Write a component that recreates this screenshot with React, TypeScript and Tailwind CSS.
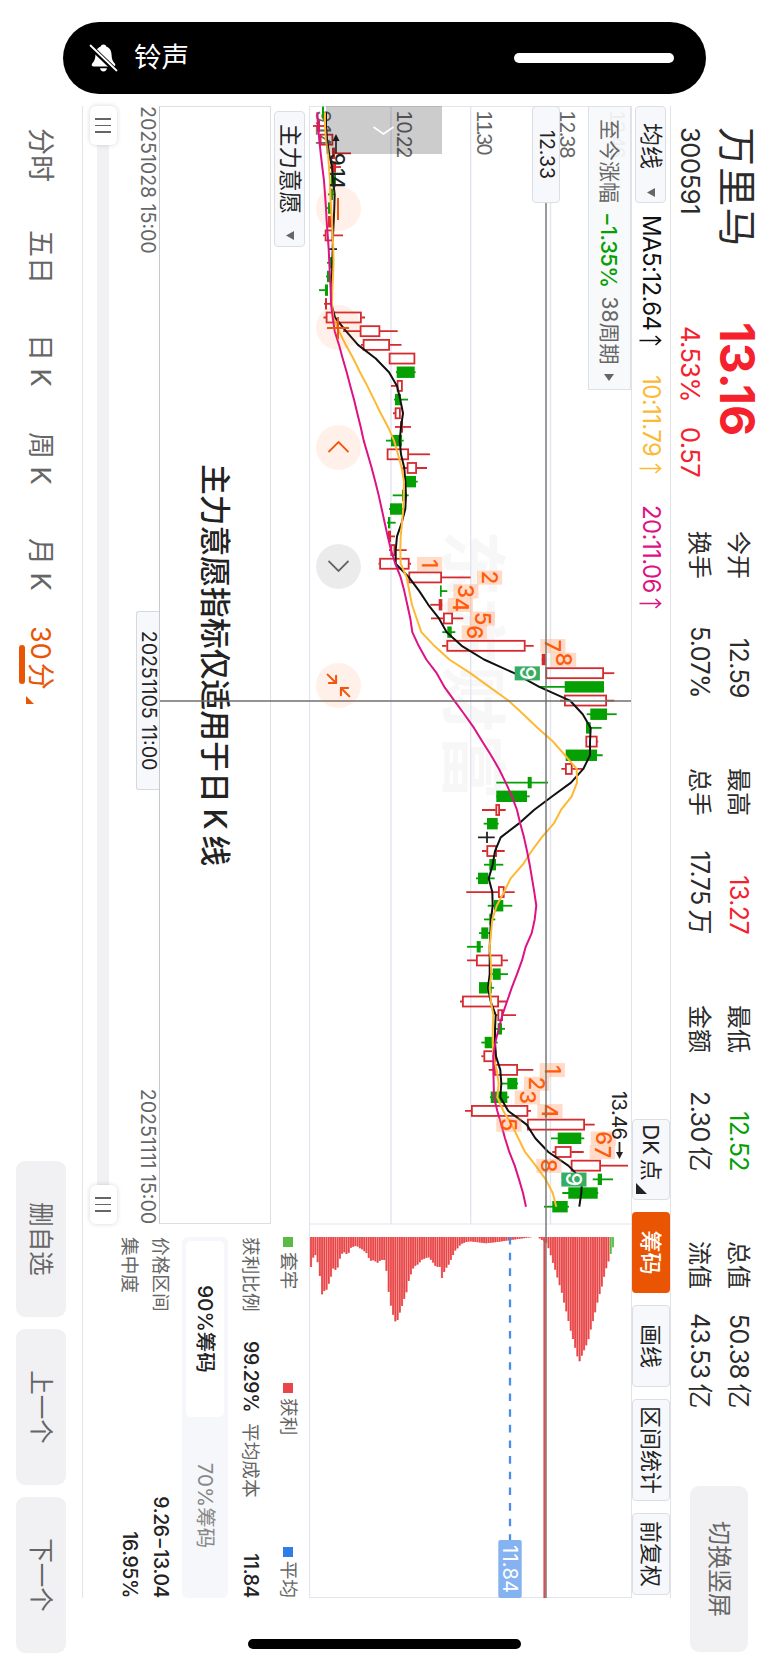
import React from "react";
import { Minimize2 } from "lucide-react";

// [body low, body high, wick low, wick high, kind]
// r = hollow red, f = filled red, g = green, k = doji
// levels are pixels above the bottom edge of the screen
type Candle = [number, number, number, number, string];

const CANDLES: Candle[] = [
  [322, 324, 322, 324, "g"],
  [317, 320, 313, 327, "f"],
  [320, 333, 320, 333, "r"],
  [332, 335, 332, 351, "f"],
  [332, 336, 332, 341, "f"],
  [331, 336, 331, 336, "g"],
  [331, 333, 328, 334, "g"],
  [328, 331, 327, 331, "g"],
  [328, 332, 328, 332, "f"],
  [325, 333, 323, 343, "r"],
  [333, 333, 329, 337, "k"],
  [329, 333, 327, 334, "g"],
  [327, 330, 326, 330, "g"],
  [325, 328, 319, 328, "g"],
  [325, 327, 324, 330, "f"],
  [326, 361.5, 323.5, 365, "r"],
  [360, 380, 343, 397.7, "r"],
  [363, 389.7, 361, 401.5, "r"],
  [389, 415, 389, 415, "r"],
  [396.7, 414.7, 396, 415.7, "g"],
  [397, 402.5, 391, 402.5, "r"],
  [395, 401, 394, 408, "g"],
  [395, 400.5, 393, 400.5, "r"],
  [400, 403, 395, 411, "f"],
  [391, 402, 386, 403.7, "g"],
  [387, 408.7, 387, 430, "r"],
  [407, 416.7, 402, 427, "r"],
  [406, 416, 406, 417.7, "g"],
  [402, 404.7, 392.7, 408.7, "g"],
  [390, 402, 389, 405, "g"],
  [388, 390.3, 387, 395.7, "g"],
  [388, 391, 387, 395, "f"],
  [390.7, 395, 389, 406.7, "r"],
  [379.5, 409.3, 378.5, 411, "r"],
  [408.7, 441.7, 408.7, 470.7, "r"],
  [440, 441.7, 440, 447.3, "g"],
  [438.7, 442.3, 430.3, 442.3, "f"],
  [443.3, 452.7, 431, 463.3, "r"],
  [447.3, 451.7, 442.3, 455.3, "g"],
  [446.7, 525.3, 442, 533.7, "r"],
  [541.7, 545.7, 541.7, 545.7, "f"],
  [545.7, 603.7, 545.7, 614.3, "r"],
  [564.7, 604, 539, 604, "g"],
  [564.3, 606.7, 560, 614.3, "r"],
  [590.3, 607, 586.7, 616.7, "g"],
  [586, 590.7, 586, 601.7, "g"],
  [585.7, 597.3, 585.7, 598.3, "r"],
  [565.7, 597, 565.7, 602.7, "g"],
  [565.3, 572.3, 561.3, 582.7, "r"],
  [527.7, 531.7, 496.3, 548, "g"],
  [496.3, 527, 496.3, 529.7, "g"],
  [495.7, 499.7, 482, 505.7, "r"],
  [487, 497.7, 483.7, 498.7, "g"],
  [487, 487, 478, 494.7, "k"],
  [486.7, 496.7, 482, 504.7, "r"],
  [489.3, 496, 484, 503.3, "g"],
  [478, 488.3, 476, 494.7, "g"],
  [498.3, 504.3, 466.3, 514.7, "r"],
  [494, 503.3, 487.7, 512.3, "g"],
  [489.3, 491.7, 484, 495.3, "g"],
  [481.3, 488.3, 479, 490.7, "g"],
  [476.7, 480.7, 467, 483, "g"],
  [476.3, 502.3, 467, 508, "r"],
  [492.7, 500.7, 489.3, 508, "g"],
  [479, 491.7, 479, 494, "g"],
  [462.3, 498.7, 460, 506.7, "r"],
  [497.7, 502.7, 495.3, 516, "r"],
  [497.7, 502, 494.7, 505, "g"],
  [484.7, 493.3, 481.3, 497.7, "g"],
  [483.7, 496, 481.3, 496, "r"],
  [494.3, 517.7, 488.7, 533.3, "r"],
  [507.3, 517.3, 501.7, 518, "g"],
  [490.7, 507.3, 490, 509, "g"],
  [471.3, 528, 465, 531, "r"],
  [527.3, 584.7, 527.3, 594.7, "r"],
  [557.7, 581.3, 551, 584.3, "g"],
  [555, 571.3, 552.3, 583.7, "r"],
  [571, 600.7, 571, 628, "r"],
  [597.7, 602, 592.7, 613, "g"],
  [568.3, 597.7, 562.3, 598.3, "g"],
  [552.3, 567.7, 544, 569, "g"],
];

const MA5 = [
  326, 326, 327, 329, 332, 333, 334.7, 334.3, 333.7, 333, 332.7, 332.3, 332, 331.7, 331.3, 335, 346, 358, 375.7, 389,
  397, 400.3, 403, 401, 399.7, 401, 404.3, 405.3, 406, 405.3, 401.7, 397, 395.7, 395.7, 409, 419.3, 428.3, 439, 446.7,
  461.7, 484, 514.3, 539.3, 570, 582.7, 590.7, 590, 590, 583.3, 571, 552.3, 534, 518.7, 500.7, 495, 492.7, 488.7,
  492.3, 492.7, 491, 490.3, 489.7, 489.7, 489.7, 488, 490.7, 495.7, 495, 495, 496, 500.3, 501.3, 500.3, 508.3, 526.7,
  535.3, 548.3, 568.3, 582, 581.3, 579.3,
];

const MA10 = [
  325, 325, 326, 328, 329, 330, 330.3, 331, 332, 332.7, 333.3, 333.5, 333, 332.3, 332, 333.3, 339, 345.7, 353.3, 360,
  367.3, 374, 380.7, 388, 394, 398, 401.7, 404, 403.7, 403.3, 402, 400.7, 400.3, 400.7, 406.7, 409.3, 412, 416.7,
  421.3, 434.3, 449.3, 470.3, 489.3, 508.3, 523.3, 537.7, 553, 565, 576.7, 577, 571.7, 561, 553.7, 541.7, 531.7, 522.7,
  510.7, 504, 496.7, 492.3, 491, 489.7, 490.7, 491.3, 489.7, 491, 493.3, 492.7, 492.7, 493.3, 496.7, 498.7, 497.3,
  503.3, 511.7, 518.3, 525, 535.7, 545.7, 552.7, 556.3,
];

const MA20 = [
  317.3, 318, 319.3, 320.7, 322.3, 324, 325, 326, 326.7, 327.7, 328.7, 329.3, 330, 330.7, 331, 332.7, 334.7, 339,
  342.7, 346.7, 350.3, 354, 357.3, 360.7, 363.7, 367.7, 371.7, 375.3, 378.7, 381.7, 384.7, 387.7, 391, 395.3, 400.7,
  404.3, 407.3, 410.3, 412.3, 418.7, 426.3, 436.7, 444.3, 454.3, 464.3, 474, 482.3, 491, 499, 505.7, 512, 517, 520.3,
  524, 527, 529.7, 532, 534.3, 536.3, 534.7, 531.7, 525.7, 522, 517, 511.7, 507, 502.3, 498.7, 495.3, 493.3, 493.3,
  493.7, 494, 497.3, 501.3, 505, 509.3, 514.7, 519, 523, 526,
];

// [candle index, low edge of the tag, digit]
const TAGS: [number, number, string][] = [
  [33, 417, "1"],
  [34, 477, "2"],
  [35, 453.3, "3"],
  [36, 447.7, "4"],
  [37, 469.7, "5"],
  [38, 461.7, "6"],
  [39, 540.3, "7"],
  [40, 551, "8"],
  [41, 514.7, "9"],
  [70, 539.7, "1"],
  [71, 524, "2"],
  [72, 514.7, "3"],
  [73, 537.3, "4"],
  [74, 496.3, "5"],
  [75, 590.7, "6"],
  [76, 589.7, "7"],
  [77, 536.3, "8"],
  [78, 561.3, "9"],
];

// [level, length] of the chip distribution bars
const CHIPS: [number, number][] = [
  [311, 30], [313, 21], [315, 17], [317, 22], [319.3, 33], [321.7, 58], [324, 54], [326, 54], [328.3, 48],
  [330.7, 41], [332.7, 31], [335, 33], [337.3, 32], [339.3, 23], [341.7, 17], [344, 15], [346, 17], [348.3, 17],
  [350.3, 11], [352.7, 10], [355, 9], [357, 9], [359.3, 11], [361.7, 12], [364, 14], [366, 15], [368.3, 20],
  [370.3, 24], [372.7, 23], [375, 24], [377.3, 26], [379.3, 24], [381.7, 23], [384, 22], [386, 29], [388.3, 52],
  [390.3, 66], [392.7, 76], [394.7, 84], [397, 85], [399.3, 77], [401.7, 70], [403.7, 63], [406, 58], [408, 46],
  [410.3, 39], [412.7, 32], [415, 29], [417, 28], [419.3, 26], [421.3, 23], [423.7, 22], [426, 21], [428.3, 20],
  [430.3, 22], [432.7, 25], [434.7, 28], [437, 31], [439.3, 26], [441.3, 43], [443.7, 36], [446, 31], [448, 29],
  [450.3, 24], [452.7, 19], [454.7, 14], [457, 12], [459.3, 9], [461.3, 7], [463.7, 6], [466, 5], [470, 4.3],
  [476, 5], [486, 6.3], [497, 5], [507, 3.6], [513, 2.7], [523, 1.3], [533, 0], [538, 0], [541, 2.5], [546, 5],
  [548.5, 11], [550.7, 18], [552.7, 25], [555, 32], [557.3, 40], [559.3, 47], [561.7, 55], [563.7, 64],
  [566, 73], [568.3, 83], [570.3, 92], [572.7, 101], [575, 110], [577.3, 119], [579.3, 125], [581.7, 119],
  [583.7, 114], [586, 109], [588.3, 103], [590.3, 94], [592.7, 85], [595, 76], [597, 67], [599.3, 58],
  [601.7, 50], [603.7, 41], [606, 32], [608.3, 25], [610.3, 18], [612.7, 11], [614.7, 4],
];

const cx = (i: number) => 6.3 + i * 13.68;
const ly = (level: number) => 631 - level;
const points = (ma: number[]) => ma.map((v, i) => `${cx(i)},${ly(v)}`).join(" ");

const chipLength = (level: number) => {
  for (let i = 1; i < CHIPS.length; i++) {
    if (CHIPS[i][0] >= level) {
      const [a, la] = CHIPS[i - 1];
      const [b, lb] = CHIPS[i];
      return la + ((lb - la) * (level - a)) / (b - a);
    }
  }
  return 0;
};

const CHIP_LEVELS = Array.from({ length: 138 }, (_, i) => 311 + i * 2.22);

function Bar({ c, i }: { c: Candle; i: number }) {
  const [lo, hi, wl, wh, kind] = c;
  const x = cx(i);
  const color = kind === "g" ? "#04a004" : kind === "k" ? "#222" : "#d52b2f";
  return (
    <g stroke={color} strokeWidth="1.8">
      {kind === "r" ? (
        <>
          <path d={`M${x} ${ly(wh)}V${ly(hi)}M${x} ${ly(lo)}V${ly(wl)}`} />
          <rect x={x - 5} y={ly(hi) + 0.6} width="10" height={Math.max(hi - lo - 1.2, 1)} />
        </>
      ) : kind === "k" ? (
        <path d={`M${x} ${ly(wh)}V${ly(wl)}M${x - 5.6} ${ly(lo)}h11.2`} />
      ) : (
        <>
          <path d={`M${x} ${ly(wh)}V${ly(wl)}`} />
          <rect x={x - 5.7} y={ly(hi)} width="11.4" height={Math.max(hi - lo, 1.6)} fill={color} stroke="none" />
        </>
      )}
    </g>
  );
}

function Chart() {
  return (
    <svg width="1493" height="322" viewBox="0 0 1493 322" className="block overflow-visible" fill="none">
      <text x="424" y="182" fontSize="66" fontWeight="700" fill="#f7f7f8" textLength="270">
        东方财富
      </text>
      <g stroke="#e3e5ee" strokeWidth="1.4">
        <path d={`M0 ${ly(391)}H1118M0 ${ly(470.7)}H1118M0 ${ly(550.5)}H1118`} />
        <path d="M0.5 -1V321.5H1491.5V-1M1118 -1V321" strokeWidth="1.2" />
      </g>
      <g className="tabular-nums" fontSize="20" fill="#666">
        <text x="4" y={ly(316)} textLength="37">9.14</text>
        <text x="4" y={ly(396.5)} textLength="49">10.22</text>
        <text x="4" y={ly(476.5)} textLength="46">11.30</text>
        <text x="4" y={ly(559.5)} textLength="49">12.38</text>
        <text x="4" y={ly(610)} textLength="49">13.46</text>
      </g>
      {CANDLES.map((c, i) => (
        <Bar key={i} c={c} i={i} />
      ))}
      <g strokeWidth="2" strokeLinejoin="round">
        <polyline points={points(MA5)} stroke="#111" />
        <polyline points={points(MA10)} stroke="#fdb933" />
        <polyline points={points(MA20)} stroke="#dd1285" />
      </g>
      {TAGS.map(([i, low, n]) => (
        <g key={i}>
          <rect
            x={cx(i) - 6.8}
            y={ly(low + 25.2)}
            width="14"
            height="25.2"
            fill={n === "9" ? "#36ad63" : "#ff9c66"}
            fillOpacity={n === "9" ? 1 : 0.36}
          />
          <text
            x={cx(i)}
            y={ly(low + 4.8)}
            fontSize="22"
            fontWeight="500"
            textAnchor="middle"
            fill={n === "9" ? "#fff" : "#ff5b0a"}
          >
            {n}
          </text>
        </g>
      ))}

      {/* lowest and highest price marks */}
      <g fill="#222" fontSize="20">
        <text x="47" y={ly(329.5)} fontWeight="500" textLength="36">9.14</text>
        <path d={`M28 ${ly(336)}l7 -3.5v7z`} />
        <path d={`M35 ${ly(336)}H47`} stroke="#222" strokeWidth="1.6" />
        <text x="985" y={ly(612)} textLength="49">13.46</text>
        <path d={`M1053 ${ly(619.5)}l-7 -3.5v7z`} />
        <path d={`M1046 ${ly(619.5)}H1036`} stroke="#222" strokeWidth="1.8" />
      </g>

      {/* chip distribution */}
      {CHIP_LEVELS.map((level) => (
        <g key={level}>
          <rect
            x="1131"
            y={ly(level) - 1.1}
            width={chipLength(level)}
            height="2.22"
            fill={level > 608.5 ? "#93d686" : "#f08a8a"}
          />
          <rect
            x="1131"
            y={ly(level) - 0.75}
            width={chipLength(level)}
            height="1.5"
            fill={level > 608.5 ? "#58bb45" : "#e94446"}
          />
        </g>
      ))}
      <rect x="1133" y={ly(545.6)} width="359" height="2.2" fill="#ea474a" />
      <path d={`M1131 ${ly(510)}H1434`} stroke="#4b8de8" strokeWidth="2.3" strokeDasharray="7.6 8.05" />
      <rect x="1434" y={ly(521.7)} width="58" height="23.4" rx="2" fill="#85b2f0" />
      <text x="1439" y={ly(502.6)} fontSize="20" fill="#fff" textLength="48">
        11.84
      </text>

      {/* crosshair */}
      <path d={`M97 ${ly(546)}H1492M595 0V471`} stroke="#707070" strokeWidth="1.4" />
    </svg>
  );
}

function Down({ className = "" }: { className?: string }) {
  return (
    <svg width="9" height="8" viewBox="0 0 9 8" className={className}>
      <path d="M0 0h9L4.500 8z" fill="#666" />
    </svg>
  );
}

function UpArrow({ className = "" }: { className?: string }) {
  return (
    <svg width="11" height="23" viewBox="0 0 11 23" className={className} fill="none" stroke="currentColor" strokeWidth="1.6">
      <path d="M5.500 22.500V1.500M1 6.500l4.500 -5l4.500 5" />
    </svg>
  );
}

const STATS = [
  { w: "w-[167px]", ml: "ml-[54px]", rows: [["今开", "12.59", "", ""], ["换手", "5.07%", "", ""]] },
  { w: "w-[166px]", ml: "ml-[70px]", rows: [["最高", "13.27", "", "text-[#f5222d]"], ["总手", "17.75", "万", ""]] },
  { w: "w-[166px]", ml: "ml-[71px]", rows: [["最低", "12.52", "", "text-[#04a004]"], ["金额", "2.30", "亿", ""]] },
  { w: "w-[167px]", ml: "ml-[70px]", rows: [["总值", "50.38", "亿", ""], ["流值", "43.53", "亿", ""]] },
];

function Header() {
  return (
    <div className="flex h-[98px] text-[#2b2b2b]">
      <div className="w-[195px] pl-[21px]">
        <p className="mt-3 text-[39px] leading-[40px] tracking-[1.2px]">万里马</p>
        <p className="mt-[14px] text-[25.500px] leading-[26px] tracking-[-0.4px]">300591</p>
      </div>
      <div className="w-[176px] pl-[21px] text-[#f5222d]">
        <p className="mt-3 text-[48px] font-bold leading-[40px]">13.16</p>
        <p className="mt-[14px] flex pl-[4px] text-[25.500px] leading-[26px] tracking-[-0.6px]">
          <span className="w-[102px]">4.53%</span>
          <span>0.57</span>
        </p>
      </div>
      {STATS.map((s, i) => (
        <div key={i} className={`${s.w} ${s.ml} mt-[17px] text-[24px] leading-[27px]`}>
          {s.rows.map(([label, value, unit, color]) => (
            <p key={label} className="mb-3 flex justify-between whitespace-nowrap">
              <span>{label}</span>
              <span className={`${color} text-[25px] tracking-[-0.6px]`}>
                {value}
                {unit && <span className="ml-[5px]">{unit}</span>}
              </span>
            </p>
          ))}
        </div>
      ))}
      <button className="ml-[78px] mt-[21px] h-[58px] w-[166px] shrink-0 rounded-[9px] bg-[#f1f1f4] text-[24px] text-[#666]">
        切换竖屏
      </button>
    </div>
  );
}

function Toolbar() {
  const btn = "h-[38px] shrink-0 rounded-[4px] border border-[#dcdee6] bg-[#f7f8fb] text-[22px] leading-none text-[#222]";
  return (
    <div className="flex h-[40px] w-[1492px] items-center border-y border-[#e3e3e7] text-[24px] leading-none tracking-[-0.6px]">
      <div className="flex h-[31px] w-[97px] shrink-0 items-center rounded-[4px] border border-[#dcdee6] bg-[#f7f8fb] pl-4 text-[23px] tracking-normal text-[#222]">
        均线
        <Down className="ml-[19px]" />
      </div>
      <div className="ml-3 flex w-[160px] items-center text-[#111]">
        MA5:12.64
        <UpArrow className="ml-[5px]" />
      </div>
      <div className="flex w-[130px] items-center text-[#fdb933]">
        10:11.79
        <UpArrow className="ml-[7px]" />
      </div>
      <div className="flex items-center text-[#dd1285]">
        20:11.06
        <UpArrow className="ml-[5px]" />
      </div>
      <div className="ml-auto mr-[3px] flex gap-[12px] tracking-normal">
        <button className={`${btn} relative w-[81px] pr-[14px]`}>
          DK<span className="ml-[4px]">点</span>
          <i className="absolute bottom-[3px] right-[5px] border-b-[11px] border-l-[11px] border-b-[#222] border-l-transparent" />
        </button>
        <button className="h-[38px] w-[81px] rounded-[4px] bg-[#ea5504] text-[22px] font-medium leading-none text-white">
          筹码
        </button>
        <button className={`${btn} w-[82px]`}>画线</button>
        <button className={`${btn} w-[102px]`}>区间统计</button>
        <button className={`${btn} w-[82px]`}>前复权</button>
      </div>
    </div>
  );
}

function Overlays() {
  const round = "flex size-[45px] items-center justify-center rounded-full bg-[#ff6010]/9 text-[#f2560d]";
  return (
    <>
      <div className="absolute left-0 top-0 flex h-[43px] w-[284px] items-center border border-[#dfe1ea] bg-[#f8f9fb]/93 pl-[12px] text-[21px] leading-none text-[#666]">
        至今涨幅
        <b className="ml-[9px] text-[22px] font-medium tracking-[-0.6px] text-[#04a004]">−1.35%</b>
        <span className="ml-[9px]">38周期</span>
        <svg width="7" height="10" viewBox="0 0 7 10" className="ml-[9px]">
          <path d="M0 0v10L7 5z" fill="#666" />
        </svg>
      </div>
      <div className="absolute left-0 top-[71px] flex h-[28px] w-[97px] items-center justify-center rounded-[4px] border border-[#dcdee6] bg-[#f7f8fb] text-[19.500px] leading-none text-[#222]">
        12.33
      </div>
      <div className="absolute left-0 top-[189px] flex h-[116px] w-[48px] items-center justify-center bg-black/20">
        <svg width="9" height="21" viewBox="0 0 9 21" fill="none" stroke="#fff" strokeWidth="1.6">
          <path d="M1 0.500l7 10l-7 10" />
        </svg>
      </div>
      <div className="absolute left-[80px] top-[270px] flex gap-[74.300px]">
        <div className={round}>
          <svg width="22" height="22" stroke="currentColor" strokeWidth="2"><path d="M0 11h22" /></svg>
        </div>
        <div className={round}>
          <svg width="22" height="22" stroke="currentColor" strokeWidth="2"><path d="M0 11h22M11 0v22" /></svg>
        </div>
        <div className={round}>
          <svg width="12" height="21" fill="none" stroke="currentColor" strokeWidth="1.8"><path d="M11 0.500L1 10.500l10 10" /></svg>
        </div>
        <div className="flex size-[45px] items-center justify-center rounded-full bg-black/8 text-[#666]">
          <svg width="12" height="21" fill="none" stroke="currentColor" strokeWidth="1.8"><path d="M1 0.500l10 10l-10 10" /></svg>
        </div>
        <div className={round}>
          <Minimize2 size={29} strokeWidth={1.7} />
        </div>
      </div>
    </>
  );
}

function Indicator() {
  return (
    <div className="w-[1118px]">
      <div className="flex h-[38px] items-center">
        <div className="ml-[5px] flex h-[31px] w-[136px] items-center rounded-[4px] border border-[#dcdee6] bg-[#f7f8fb] pl-[12px] text-[22.500px] leading-none text-[#222]">
          主力意愿
          <Down className="ml-[17px]" />
        </div>
      </div>
      <div className="flex h-[112px] items-center justify-center whitespace-pre border border-[#dedfe4] border-b-[#c9c9cc] text-[30.800px] font-medium leading-none text-[#222] [word-spacing:-2.500px]">
        主力意愿指标仅适用于日 K 线
      </div>
      <div className="relative flex h-[24px] items-center justify-between text-[19.500px] leading-none text-[#666]">
        <span>20251028 15:00</span>
        <span>20251111 15:00</span>
        <div className="absolute left-[505px] top-0 flex h-[23px] w-[179px] items-center justify-center rounded-b-[3px] border border-t-0 border-[#d6d8e0] bg-[#f7f8fb] text-[#222]">
          20251105 11:00
        </div>
      </div>
      <div className="relative mt-[26px] h-[12px] bg-[#f1f1f4]">
        <Handle className="left-0" />
        <Handle className="right-0" />
      </div>
    </div>
  );
}

function Handle({ className }: { className: string }) {
  return (
    <div
      className={`${className} absolute top-[-8px] flex h-[27px] w-[39px] items-center justify-center gap-[5px] rounded-[6px] bg-white shadow-[0_0_5px_rgba(0,0,0,0.16)]`}
    >
      <i className="h-[16px] w-[1.500px] bg-[#666]" />
      <i className="h-[16px] w-[1.500px] bg-[#666]" />
      <i className="h-[16px] w-[1.500px] bg-[#666]" />
    </div>
  );
}

function ChipInfo() {
  const row = "flex items-center leading-none text-[#666] whitespace-nowrap";
  const num = "text-[19.500px] font-medium tracking-[-0.4px] text-[#222]";
  return (
    <div className="ml-[13px] w-[361px] text-[18.700px]">
      <div className={`${row} mt-[9px] h-[24px]`}>
        <i className="mr-[5px] size-[10px] bg-[#5abb44]" />
        <span className="w-[131px]">套牢</span>
        <i className="mr-[5px] size-[10px] bg-[#ea4548]" />
        <span>获利</span>
        <i className="ml-auto mr-[4px] size-[10px] bg-[#2f7de6]" />
        <span>平均</span>
      </div>
      <div className={`${row} mt-[14px] h-[24px]`}>
        <span className="w-[104px]">获利比例</span>
        <span className={`${num} w-[82px]`}>99.29%</span>
        <span>平均成本</span>
        <span className={`${num} ml-auto`}>11.84</span>
      </div>
      <div className="mt-[10px] flex h-[46px] rounded-[6px] bg-[#f6f7fa] p-[4px] text-[20.500px] leading-none">
        <div className="flex w-[176px] items-center justify-center rounded-[5px] bg-white font-medium text-[#222]">
          90%筹码
        </div>
        <div className="flex flex-1 items-center justify-center text-[#888]">70%筹码</div>
      </div>
      <div className={`${row} mt-[10px] h-[24px] justify-between`}>
        <span>价格区间</span>
        <span className={num}>9.26−13.04</span>
      </div>
      <div className={`${row} mt-[7px] h-[24px] justify-between`}>
        <span>集中度</span>
        <span className={num}>16.95%</span>
      </div>
    </div>
  );
}

function Footer() {
  return (
    <div className="flex h-[82px] w-[1547px] items-center text-[27px] leading-none text-[#666]">
      <div className="flex whitespace-pre pl-[22px]">
        <span className="w-[102px]">分时</span>
        <span className="w-[104px]">五日</span>
        <span className="w-[98px]">日 K</span>
        <span className="w-[106px]">周 K</span>
        <span className="w-[88px]">月 K</span>
        <span className="relative text-[#ea5504]">
          <span className="mr-[3px]">30</span>分
          <i className="absolute left-[19px] top-[29px] h-[6px] w-[39px] rounded-full bg-[#ea5504]" />
          <i className="absolute left-[70px] top-[20px] border-b-[8px] border-l-[8px] border-b-[#ea5504] border-l-transparent" />
        </span>
      </div>
      <div className="ml-auto flex gap-[12px] text-[24.500px]">
        <button className="h-[50px] w-[156px] rounded-[9px] bg-[#f1f1f4]">删自选</button>
        <button className="h-[50px] w-[156px] rounded-[9px] bg-[#f1f1f4]">上一个</button>
        <button className="h-[50px] w-[156px] rounded-[9px] bg-[#f1f1f4]">下一个</button>
      </div>
    </div>
  );
}

// Ringer pill, it stays upright while the app is turned to landscape
function Island() {
  return (
    <div className="absolute left-[63px] top-[22px] flex h-[72px] w-[643px] items-center rounded-full bg-black pl-[26px] pr-[32px] text-[27.500px] leading-none text-white">
      <svg width="29" height="30" viewBox="0 0 29 30">
        <path d="M14.500 1.500c-1.800 0-2.800 1-3 2.300C7.500 5.200 6.500 8.500 6.400 12c-.1 4.800-1.500 6.500-3.200 8.600c-1 1.400-.4 2.800 1 2.800h20.600c1.400 0 2-1.400 1-2.800c-1.700-2.100-3.100-3.800-3.200-8.600c-.1-3.500-1.100-6.800-5.100-8.200c-.2-1.300-1.200-2.300-3-2.300z" fill="#fff" />
        <path d="M11 25.300h7c-.3 1.900-1.600 3.200-3.500 3.200s-3.200-1.300-3.500-3.200z" fill="#fff" />
        <path d="M1.500 3.500L27 28" stroke="#000" strokeWidth="5" />
        <path d="M1.500 2.500L27.500 27.500" stroke="#fff" strokeWidth="1.800" strokeLinecap="round" />
      </svg>
      <span className="ml-[16px]">铃声</span>
      <div className="ml-auto h-[10px] w-[160px] rounded-full bg-white" />
    </div>
  );
}

function App() {
  return (
    <div className="relative h-[1665px] w-[769px] overflow-hidden bg-white font-['Inter','Noto_Sans_CJK_SC',sans-serif]">
      <div className="relative h-[769px] w-[1665px] origin-top-left translate-x-[769px] rotate-90 pl-[106px]">
        <Header />
        <Toolbar />
        <div className="relative h-[322px]">
          <Chart />
          <Overlays />
        </div>
        <div className="flex h-[227px] w-[1492px] border-b border-[#e3e3e7]">
          <Indicator />
          <ChipInfo />
        </div>
        <Footer />
        <div className="absolute left-[1639px] top-[248px] h-[273px] w-[10px] rounded-full bg-black" />
      </div>
      <Island />
    </div>
  );
}

export default App;
